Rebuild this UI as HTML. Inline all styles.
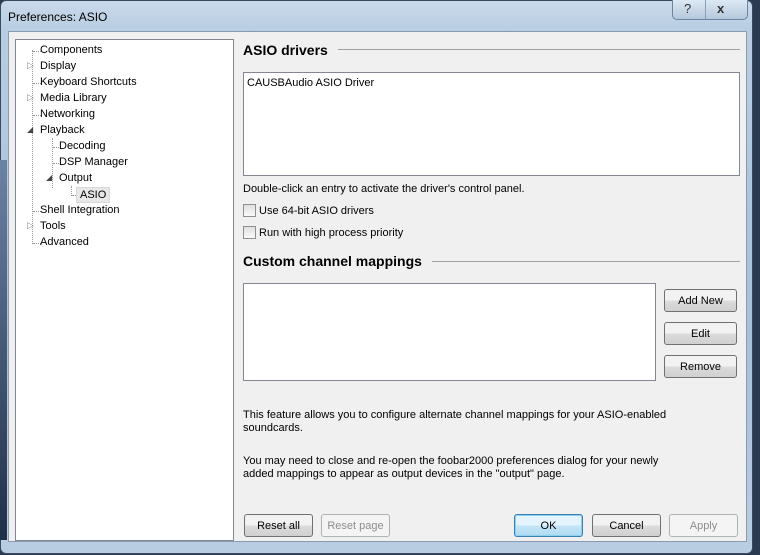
<!DOCTYPE html>
<html><head><style>
*{margin:0;padding:0;box-sizing:border-box}
body{width:760px;height:555px;overflow:hidden;background:#2a3a50;font-family:"Liberation Sans",sans-serif;font-size:11px;color:#000;position:relative}
.frame{position:absolute;left:0;top:0;width:753px;height:554px;border-radius:6px;background:linear-gradient(#c9d9ea,#b8cde2 30px,#a8bfd8 60%,#b9cde2);border:1px solid #394b62}
.lf{position:absolute;left:0;top:160px;width:7px;height:380px;background:linear-gradient(#6b83a2,#1f2f48)}
.title{position:absolute;left:8px;top:10px;font-size:12px;color:#000}
.btns{position:absolute;left:672px;top:0;width:76px;height:20px;border:1px solid #6d85a2;border-top:none;border-radius:0 0 5px 5px;background:linear-gradient(#dce8f4,#b5c8dc)}
.btns span{position:absolute;top:1px;font-size:13px;color:#333}
.client{position:absolute;left:8px;top:31px;width:739px;height:511px;background:#f0f0f0;border:1px solid #8a9bb0}
.tree{position:absolute;left:15px;top:39px;width:219px;height:502px;background:#fff;border:1px solid #828790}
.ti{position:absolute;font-size:11px;white-space:nowrap;margin-top:2px}
.dl{position:absolute;border-left:1px dotted #999}
.dh{position:absolute;border-top:1px dotted #999;width:8px;margin-top:2px}
h2{position:absolute;font-size:14px;font-weight:bold;margin-top:2px}
.hr{position:absolute;height:1px;background:#a0a0a0}
.box{position:absolute;background:#fff;border:1px solid #828790}
.cb{position:absolute;width:13px;height:13px;border:1px solid #8f8f8f;background:linear-gradient(#e0e0e0,#fafafa)}
.t{position:absolute;white-space:nowrap;margin-top:2px}
.b{position:absolute;height:23px;border:1px solid #707070;border-radius:3px;background:linear-gradient(#f2f2f2 50%,#dcdcdc 50%,#d0d0d0);text-align:center;line-height:23px}
.dis{border-color:#adb2b5;background:#f4f4f4;color:#8d8d8d}
.ok{border-color:#3c7fb1;background:linear-gradient(#e5f4fc 50%,#c4e5f6 50%,#aedcf3);box-shadow:inset 0 0 0 1px #8fd0f1}
</style></head><body>
<div class="frame"></div>
<div class="lf"></div>
<div class="title">Preferences: ASIO</div>
<div class="btns"><span style="left:11px">?</span><span style="left:44px;font-weight:bold">x</span><div style="position:absolute;left:32px;top:0;width:1px;height:19px;background:#8aa0b8"></div></div>
<div class="client"></div>
<div class="tree">
<div class="dl" style="left:16px;top:10px;height:194px"></div>
<div class="dl" style="left:36px;top:98px;height:50px"></div>
<div class="dl" style="left:55px;top:146px;height:10px"></div>
<div class="dh" style="left:17px;top:9px"></div><div class="ti" style="left:24px;top:2px">Components</div>
<div class="ti" style="left:11px;top:18px;color:#888;font-size:9px">▷</div><div class="ti" style="left:24px;top:18px">Display</div>
<div class="dh" style="left:17px;top:41px"></div><div class="ti" style="left:24px;top:34px">Keyboard Shortcuts</div>
<div class="ti" style="left:11px;top:50px;color:#888;font-size:9px">▷</div><div class="ti" style="left:24px;top:50px">Media Library</div>
<div class="dh" style="left:17px;top:73px"></div><div class="ti" style="left:24px;top:66px">Networking</div>
<div class="ti" style="left:11px;top:83px;color:#444;font-size:8px">◢</div><div class="ti" style="left:24px;top:82px">Playback</div>
<div class="dh" style="left:37px;top:105px"></div><div class="ti" style="left:43px;top:98px">Decoding</div>
<div class="dh" style="left:37px;top:121px"></div><div class="ti" style="left:43px;top:114px">DSP Manager</div>
<div class="ti" style="left:30px;top:131px;color:#444;font-size:8px">◢</div><div class="ti" style="left:43px;top:130px">Output</div>
<div class="dh" style="left:56px;top:153px"></div><div class="ti" style="left:60px;top:145px;padding:1px 3px;background:#e8e8e8;border:1px solid #d9d9d9">ASIO</div>
<div class="dh" style="left:17px;top:169px"></div><div class="ti" style="left:24px;top:162px">Shell Integration</div>
<div class="ti" style="left:11px;top:178px;color:#888;font-size:9px">▷</div><div class="ti" style="left:24px;top:178px">Tools</div>
<div class="dh" style="left:17px;top:201px"></div><div class="ti" style="left:24px;top:194px">Advanced</div>
</div>
<h2 style="left:243px;top:40px">ASIO drivers</h2><div class="hr" style="left:338px;top:49px;width:402px"></div>
<div class="box" style="left:243px;top:72px;width:497px;height:104px"><div class="t" style="left:3px;top:2px">CAUSBAudio ASIO Driver</div></div>
<div class="t" style="left:243px;top:181px">Double-click an entry to activate the driver's control panel.</div>
<div class="cb" style="left:243px;top:204px"></div><div class="t" style="left:259px;top:203px">Use 64-bit ASIO drivers</div>
<div class="cb" style="left:243px;top:226px"></div><div class="t" style="left:259px;top:225px">Run with high process priority</div>
<h2 style="left:243px;top:251px">Custom channel mappings</h2><div class="hr" style="left:432px;top:261px;width:308px"></div>
<div class="box" style="left:243px;top:283px;width:413px;height:98px"></div>
<div class="b" style="left:664px;top:289px;width:73px">Add New</div>
<div class="b" style="left:664px;top:322px;width:73px">Edit</div>
<div class="b" style="left:664px;top:355px;width:73px">Remove</div>
<div class="t" style="left:243px;top:407px;line-height:13px">This feature allows you to configure alternate channel mappings for your ASIO-enabled<br>soundcards.</div>
<div class="t" style="left:243px;top:453px;line-height:13px">You may need to close and re-open the foobar2000 preferences dialog for your newly<br>added mappings to appear as output devices in the "output" page.</div>
<div class="b" style="left:244px;top:514px;width:69px">Reset all</div>
<div class="b dis" style="left:321px;top:514px;width:69px">Reset page</div>
<div class="b ok" style="left:514px;top:514px;width:69px">OK</div>
<div class="b" style="left:592px;top:514px;width:69px">Cancel</div>
<div class="b dis" style="left:669px;top:514px;width:69px">Apply</div>
</body></html>
